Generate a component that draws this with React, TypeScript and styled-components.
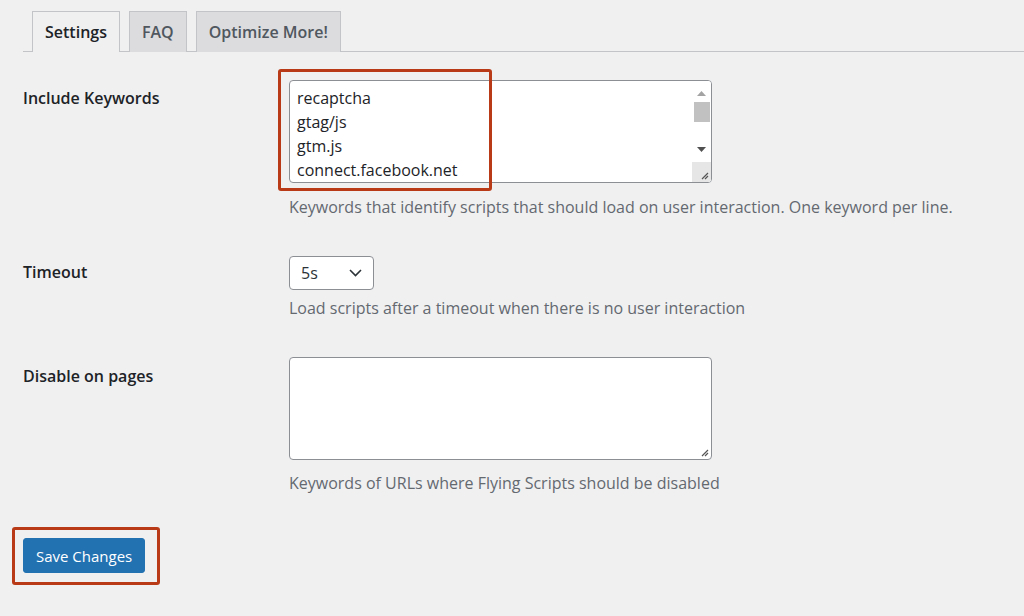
import { FC } from "react";
import styled, { createGlobalStyle } from "styled-components";

const GlobalStyle = createGlobalStyle`
  html, body {
    margin: 0;
    padding: 0;
    background: #f0f0f1;
  }
  body {
    font-family: "Segoe UI", "Open Sans", "Noto Sans", sans-serif;
    color: #1d2327;
    font-size: 16px;
  }
`;

const Page = styled.div({
  width: 1024,
  height: 616,
  overflow: "hidden",
  paddingLeft: 23,
  boxSizing: "border-box",
});

const TabBar = styled.nav({
  display: "flex",
  gap: 9,
  paddingTop: 11,
  paddingLeft: 9,
  borderBottom: "1px solid #c3c4c7",
});

const Tab = styled.div<{ $active?: boolean }>(({ $active }) => ({
  height: 40,
  padding: "0 12px",
  display: "flex",
  alignItems: "center",
  border: "1px solid #c3c4c7",
  borderBottom: "none",
  marginBottom: -1,
  background: $active ? "#f0f0f1" : "#dcdcde",
  boxShadow: $active ? "0 1px 0 #f0f0f1" : "none",
  color: $active ? "#1d2327" : "#50575e",
  fontWeight: 600,
  fontSize: 16,
}));

const Form = styled.div({
  paddingTop: 9,
});

const Row = styled.div({
  display: "grid",
  gridTemplateColumns: "266px 1fr",
  padding: "19px 0",
});

const Label = styled.div<{ $offset: number }>(({ $offset }) => ({
  fontWeight: 600,
  fontSize: 16,
  lineHeight: "22px",
  paddingTop: $offset,
}));

const Field = styled.div({
  display: "flex",
  flexDirection: "column",
  alignItems: "flex-start",
});

const Highlight = styled.div({
  position: "relative",
});

const RedBox = styled.div<{ $w: number; $h: number; $l: number; $t: number }>(
  ({ $w, $h, $l, $t }) => ({
    position: "absolute",
    left: -$l,
    top: -$t,
    width: $w,
    height: $h,
    border: "3px solid #b83a16",
    borderRadius: 3,
    boxSizing: "border-box",
    pointerEvents: "none",
  })
);

const TextBox = styled.div({
  position: "relative",
  width: 423,
  height: 103,
  boxSizing: "border-box",
  border: "1px solid #8c8f94",
  borderRadius: 4,
  background: "#fff",
  overflow: "hidden",
});

const TextArea = styled.textarea({
  display: "block",
  width: "100%",
  height: "100%",
  boxSizing: "border-box",
  border: "none",
  outline: "none",
  resize: "none",
  overflow: "hidden",
  background: "transparent",
  padding: "5px 7px",
  fontFamily: "inherit",
  fontSize: 16,
  lineHeight: "24px",
  color: "#1d2327",
});

const ScrollBar = styled.div({
  position: "absolute",
  top: 0,
  right: 0,
  bottom: 0,
  width: 19,
  display: "flex",
  flexDirection: "column",
  alignItems: "center",
  background: "#fff",
});

const ArrowBtn = styled.div<{ $top?: boolean }>(({ $top }) => ({
  height: 17,
  marginTop: $top ? 4 : 0,
  marginBottom: $top ? 0 : 4,
  display: "flex",
  alignItems: "center",
  justifyContent: "center",
}));

const Thumb = styled.div({
  width: 16,
  height: 20,
  background: "#c1c1c1",
});

const Track = styled.div({
  flex: 1,
});

const Corner = styled.div({
  width: 19,
  height: 20,
  background: "#e6e6e6",
});

const Grip = styled.svg({
  position: "absolute",
  right: 2,
  bottom: 2,
});

const Description = styled.p<{ $gap: number }>(({ $gap }) => ({
  margin: `${$gap}px 0 0`,
  color: "#646970",
  fontSize: 16,
  lineHeight: "22px",
}));

const Select = styled.div({
  width: 85,
  height: 34,
  boxSizing: "border-box",
  border: "1px solid #8c8f94",
  borderRadius: 4,
  background: "#fff",
  display: "flex",
  alignItems: "center",
  justifyContent: "space-between",
  padding: "0 11px",
  fontSize: 16,
  color: "#2c3338",
});

const Footer = styled.div({
  paddingTop: 25,
});

const Button = styled.button({
  display: "block",
  height: 35,
  padding: "0 12px",
  background: "#2271b1",
  border: "1px solid #2271b1",
  borderRadius: 3,
  color: "#fff",
  fontFamily: "inherit",
  fontSize: 15,
  cursor: "pointer",
});

const ResizeGrip: FC = () => (
  <Grip width="9" height="9" viewBox="0 0 9 9">
    <path d="M8 2 L2 8 M8 5 L5 8" stroke="#555" strokeWidth="1.2" />
  </Grip>
);

const keywords = [
  "recaptcha",
  "gtag/js",
  "gtm.js",
  "connect.facebook.net",
  "static.hotjar.com",
  "script.hotjar.com",
].join("\n");

const App: FC = () => (
  <Page>
    <GlobalStyle />
    <TabBar>
      <Tab $active>Settings</Tab>
      <Tab>FAQ</Tab>
      <Tab>Optimize More!</Tab>
    </TabBar>
    <Form>
      <Row>
        <Label $offset={7}>Include Keywords</Label>
        <Field>
          <Highlight>
            <TextBox>
              <TextArea defaultValue={keywords} />
              <ScrollBar>
                <ArrowBtn $top>
                  <svg width="9" height="5" viewBox="0 0 9 5">
                    <path d="M0 5 L4.5 0 L9 5 Z" fill="#a3a3a3" />
                  </svg>
                </ArrowBtn>
                <Thumb />
                <Track />
                <ArrowBtn>
                  <svg width="9" height="5" viewBox="0 0 9 5">
                    <path d="M0 0 L9 0 L4.5 5 Z" fill="#505050" />
                  </svg>
                </ArrowBtn>
                <Corner />
              </ScrollBar>
              <ResizeGrip />
            </TextBox>
            <RedBox $l={11} $t={11} $w={214} $h={122} />
          </Highlight>
          <Description $gap={13}>
            Keywords that identify scripts that should load on user interaction. One keyword per line.
          </Description>
        </Field>
      </Row>
      <Row>
        <Label $offset={5}>Timeout</Label>
        <Field>
          <Select>
            <span>5s</span>
            <svg width="13" height="8" viewBox="0 0 13 8">
              <path d="M1 1 L6.5 6.5 L12 1" fill="none" stroke="#2c3338" strokeWidth="1.6" />
            </svg>
          </Select>
          <Description $gap={7}>
            Load scripts after a timeout when there is no user interaction
          </Description>
        </Field>
      </Row>
      <Row>
        <Label $offset={8}>Disable on pages</Label>
        <Field>
          <TextBox>
            <TextArea defaultValue="" />
            <ResizeGrip />
          </TextBox>
          <Description $gap={12}>
            Keywords of URLs where Flying Scripts should be disabled
          </Description>
        </Field>
      </Row>
    </Form>
    <Footer>
      <Highlight style={{ display: "inline-block" }}>
        <Button>Save Changes</Button>
        <RedBox $l={11} $t={11} $w={148} $h={58} />
      </Highlight>
    </Footer>
  </Page>
);

export default App;
